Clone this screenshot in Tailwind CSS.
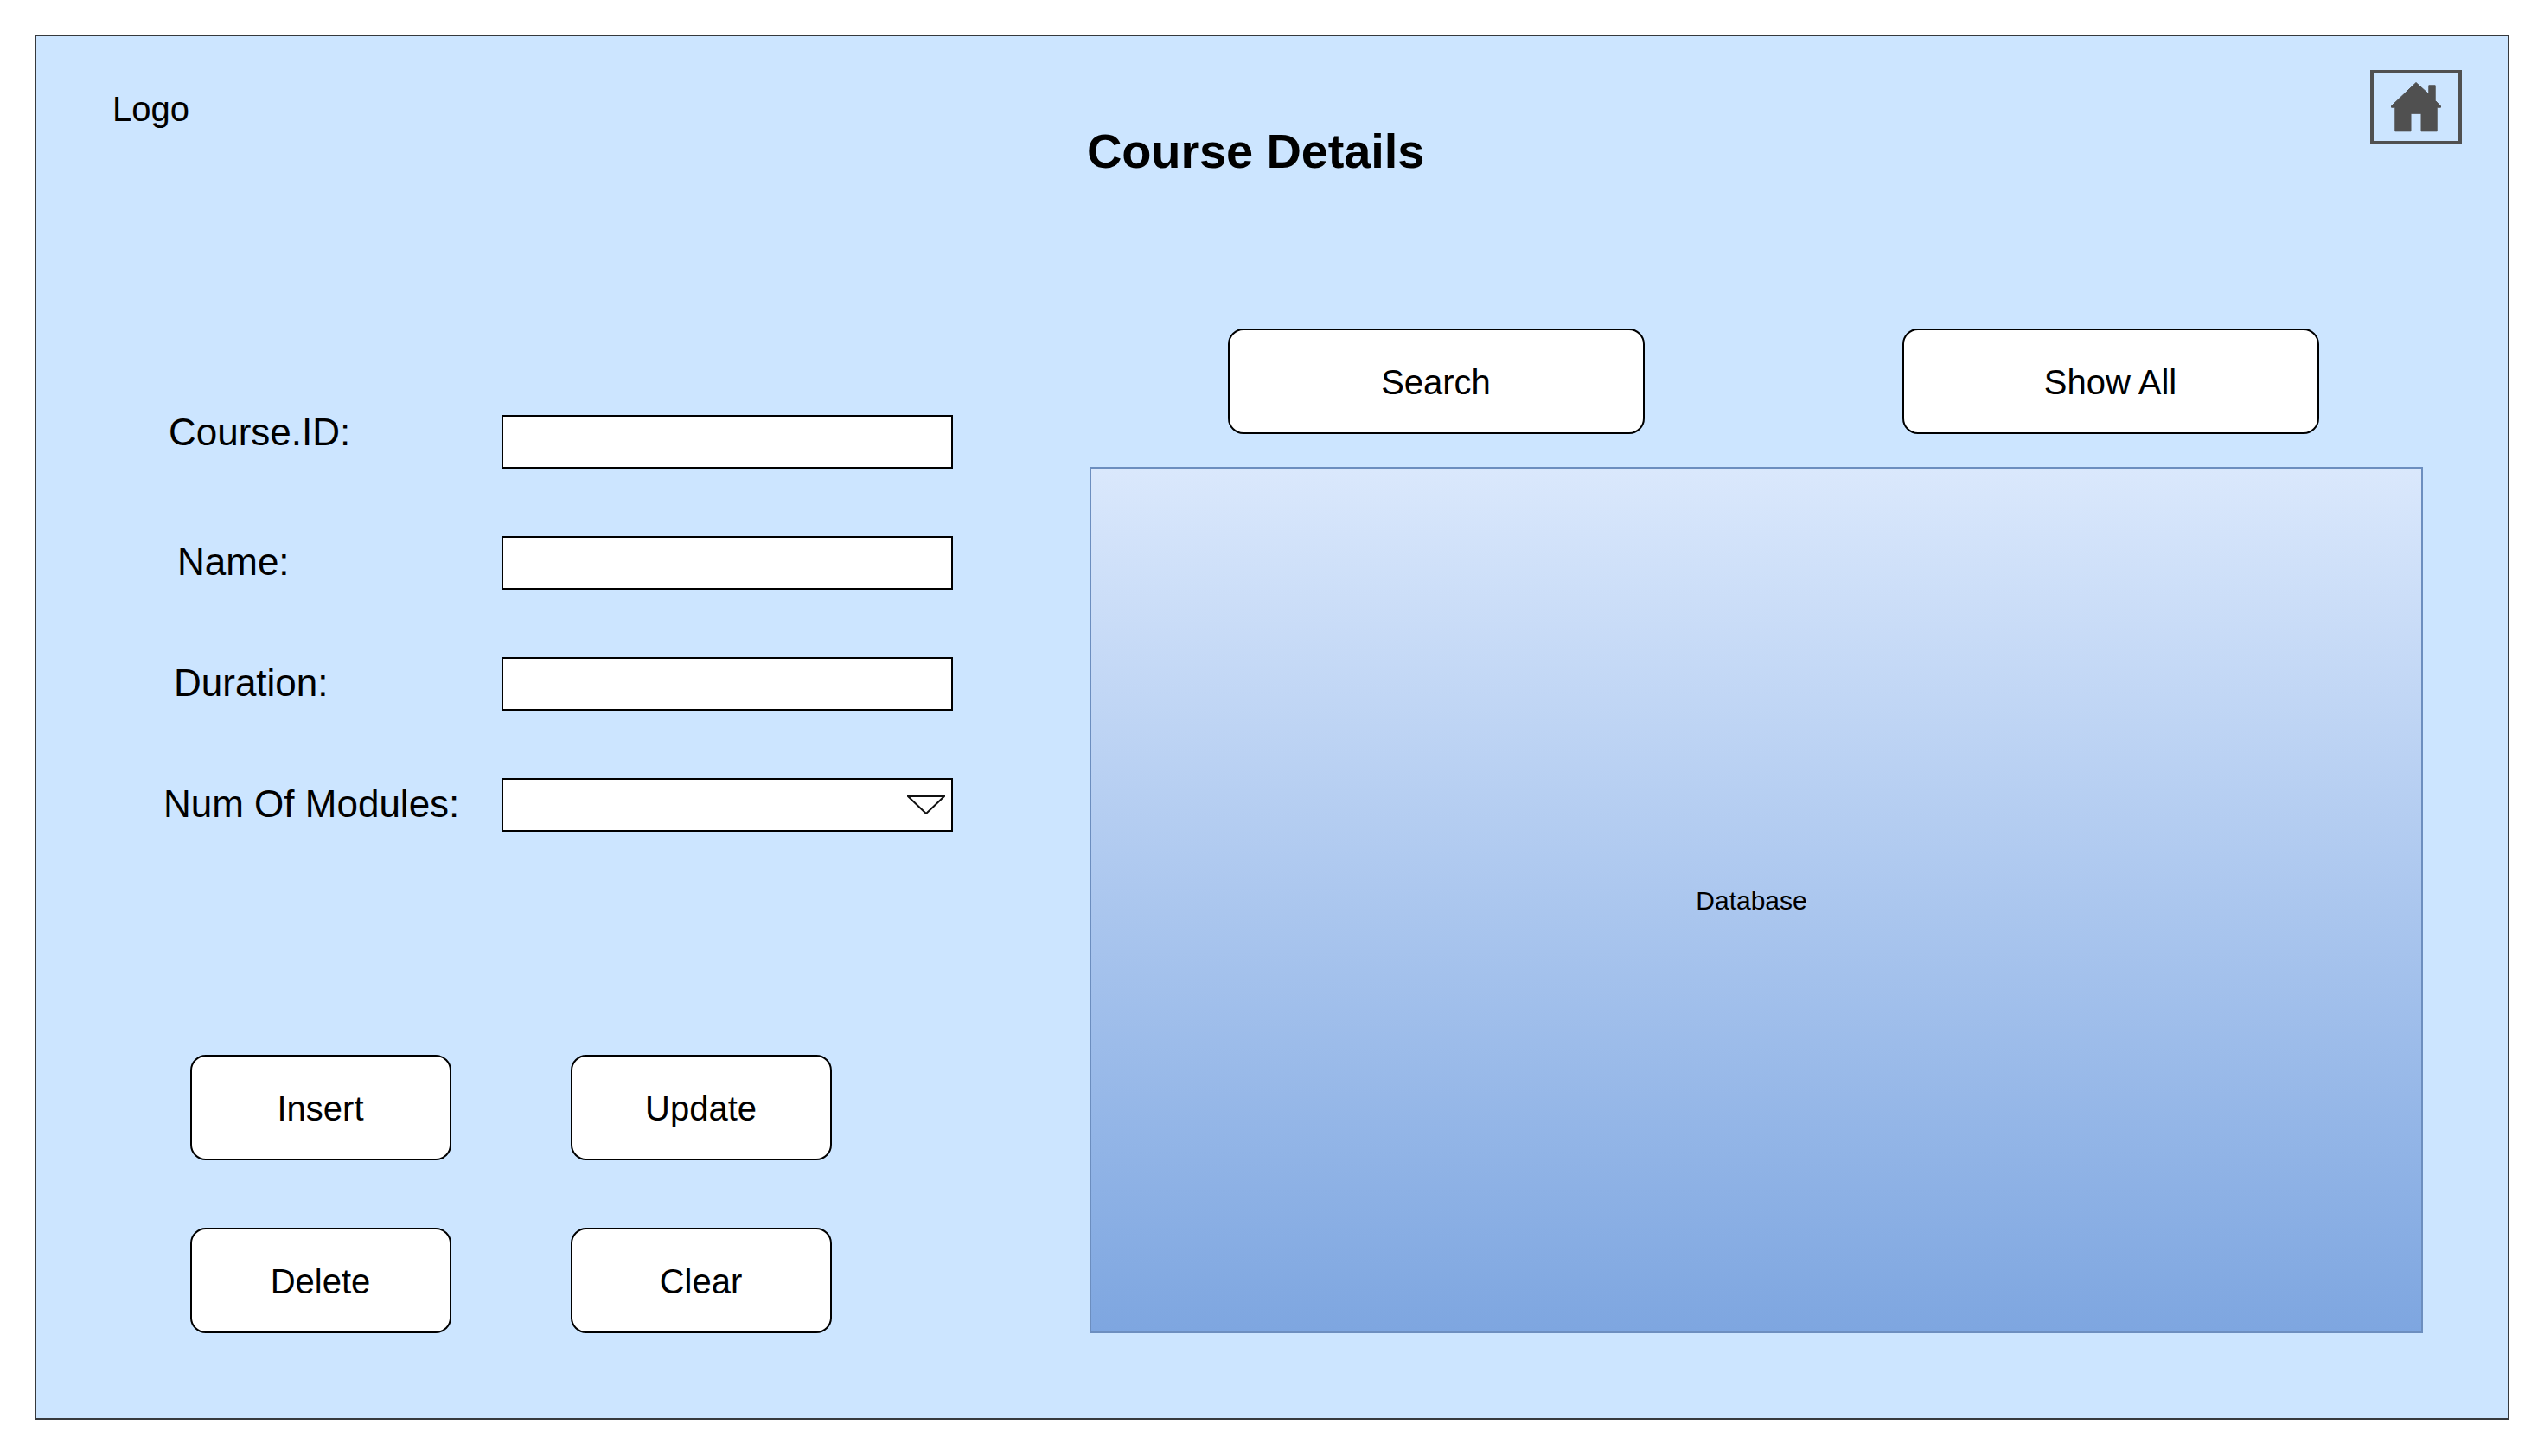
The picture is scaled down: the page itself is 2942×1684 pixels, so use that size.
<!DOCTYPE html>
<html lang="en">
  <head>
    <meta charset="UTF-8" />
    <title>Course Details</title>
    <script src="https://cdn.jsdelivr.net/npm/@tailwindcss/browser@4"></script>
  </head>
  <body class="bg-white text-black font-['Liberation_Sans',Arial,sans-serif]">
    <div class="p-[40px]">
      <div class="w-[2862px] h-[1602px] border-2 border-[#36393d] bg-[#cce5ff] flex flex-col">
        <!-- Header -->
        <header class="h-[338px] flex items-start pl-[88px] pr-[53px]">
          <div class="w-[1127px] mt-[61px] text-[40px] leading-[46px]">Logo</div>
          <h1 class="mt-[101px] text-[56px] leading-[64px] font-bold tracking-[-0.14px]">Course Details</h1>
          <div class="ml-auto mt-[39px] w-[106px] h-[86px] border-[4px] border-[#505050] flex items-center justify-center">
            <svg class="w-[58px] h-[58px]" viewBox="0 0 58 58" fill="#505050" stroke="#505050" stroke-width="1" stroke-linejoin="round">
              <path d="M29 .5L.5 27.5V29.2H4.8V56.8H23V36.3H35V56.8H53.2V29.2H57.5V27.8L51.2 21.3V3.8H43.8V13.8Z" />
            </svg>
          </div>
        </header>

        <div class="flex">
          <!-- Form -->
          <section class="w-[1218px] pt-[100px]">
            <div class="flex flex-col gap-[78px]">
              <div class="flex items-center h-[62px]">
                <label class="w-[538px] pl-[153px] pb-[23px] text-[44px] leading-[50px]">Course.ID:</label>
                <input type="text" class="w-[522px] h-[62px] border-2 border-black bg-white" />
              </div>
              <div class="flex items-center h-[62px]">
                <label class="w-[538px] pl-[163px] pb-[3px] text-[44px] leading-[50px]">Name:</label>
                <input type="text" class="w-[522px] h-[62px] border-2 border-black bg-white" />
              </div>
              <div class="flex items-center h-[62px]">
                <label class="w-[538px] pl-[159px] pb-[3px] text-[44px] leading-[50px]">Duration:</label>
                <input type="text" class="w-[522px] h-[62px] border-2 border-black bg-white" />
              </div>
              <div class="flex items-center h-[62px]">
                <label class="w-[538px] pl-[147px] pb-[3px] text-[44px] leading-[50px]">Num Of Modules:</label>
                <div class="w-[522px] h-[62px] border-2 border-black bg-white flex items-center justify-end pr-[7px]">
                  <svg class="w-[44px] h-[22px]" viewBox="0 0 44 22" fill="none" stroke="#111" stroke-width="2">
                    <path d="M1 1H43L22 21Z" />
                  </svg>
                </div>
              </div>
            </div>

            <div class="ml-[178px] mt-[258px] grid grid-cols-[302px_302px] gap-x-[138px] gap-y-[78px] w-max text-[40px]">
              <button class="h-[122px] pt-[2px] pr-[1px] rounded-[18px] border-2 border-black bg-white">Insert</button>
              <button class="h-[122px] pt-[2px] pr-[1px] rounded-[18px] border-2 border-black bg-white">Update</button>
              <button class="h-[122px] pt-[2px] pr-[1px] rounded-[18px] border-2 border-black bg-white">Delete</button>
              <button class="h-[122px] pt-[2px] pr-[1px] rounded-[18px] border-2 border-black bg-white">Clear</button>
            </div>
          </section>

          <!-- Search + database -->
          <section class="flex flex-col gap-[38px]">
            <div class="flex gap-[298px] pl-[160px] text-[40px]">
              <button class="w-[482px] h-[122px] pt-[2px] pr-[1px] rounded-[18px] border-2 border-black bg-white">Search</button>
              <button class="w-[482px] h-[122px] pt-[2px] pr-[1px] rounded-[18px] border-2 border-black bg-white">Show All</button>
            </div>
            <div class="w-[1542px] h-[1002px] border-2 border-[#6c8ebf] bg-linear-to-b from-[#dae8fc] to-[#7ea6e0] flex items-center justify-center pr-[11px] text-[30px]">
              Database
            </div>
          </section>
        </div>
      </div>
    </div>
  </body>
</html>
